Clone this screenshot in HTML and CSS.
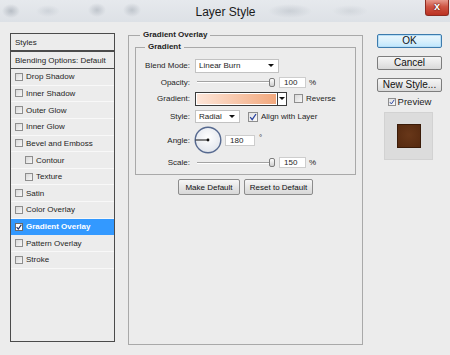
FILE: index.html
```html
<!DOCTYPE html>
<html lang="en">
<head>
  <meta charset="UTF-8">
  <title>Layer Style</title>
  <link rel="stylesheet" href="styles.css">
</head>
<body>
  <div class="titlebar">
    <span class="title">Layer Style</span>
    <span class="close">x</span>
  </div>

  <div class="main">
    <ul class="styles-list">
      <li class="head">Styles</li>
      <li class="blend">Blending Options: Default</li>
      <li><span class="cb"></span>Drop Shadow</li>
      <li><span class="cb"></span>Inner Shadow</li>
      <li><span class="cb"></span>Outer Glow</li>
      <li><span class="cb"></span>Inner Glow</li>
      <li><span class="cb"></span>Bevel and Emboss</li>
      <li class="indent"><span class="cb"></span>Contour</li>
      <li class="indent"><span class="cb"></span>Texture</li>
      <li><span class="cb"></span>Satin</li>
      <li><span class="cb"></span>Color Overlay</li>
      <li class="active"><span class="cb on"><svg width="6" height="6" viewBox="0 0 6 6"><path d="M0.6 3.2 L2.3 5 L5.4 0.6" fill="none" stroke="#1d2f6a" stroke-width="1.2"/></svg></span>Gradient Overlay</li>
      <li><span class="cb"></span>Pattern Overlay</li>
      <li><span class="cb"></span>Stroke</li>
    </ul>

    <fieldset class="box">
      <legend>Gradient Overlay</legend>
      <fieldset class="inner">
        <legend>Gradient</legend>
        <div class="form">
          <label>Blend Mode:</label>
          <div class="ctl">
            <div class="select blend-sel">Linear Burn<span class="arrow"></span></div>
          </div>

          <label>Opacity:</label>
          <div class="ctl">
            <div class="slider"><span class="track"></span><span class="thumb"></span></div>
            <span class="num">100</span><span class="unit">%</span>
          </div>

          <label>Gradient:</label>
          <div class="ctl">
            <div class="grad"><span class="grad-fill"></span><span class="grad-drop"><span class="arrow"></span></span></div>
            <span class="cb reverse"></span><span class="cb-text">Reverse</span>
          </div>

          <label>Style:</label>
          <div class="ctl">
            <div class="select style-sel">Radial<span class="arrow"></span></div>
            <span class="cb on align"><svg width="8" height="8" viewBox="0 0 8 8"><path d="M1.2 4.2 L3.2 6.6 L7 1" fill="none" stroke="#2c45a0" stroke-width="1.3"/></svg></span><span class="cb-text">Align with Layer</span>
          </div>

          <label>Angle:</label>
          <div class="ctl">
            <svg class="dial" width="28" height="28" viewBox="0 0 28 28">
              <defs>
                <radialGradient id="dialFill" cx="50%" cy="40%" r="60%">
                  <stop offset="0" stop-color="#ffffff"/>
                  <stop offset="1" stop-color="#e1e5ec"/>
                </radialGradient>
              </defs>
              <circle cx="14" cy="14" r="12.8" fill="url(#dialFill)" stroke="#56698f" stroke-width="1.4"/>
              <line x1="1.5" y1="14" x2="14" y2="14" stroke="#111" stroke-width="1"/>
              <circle cx="14" cy="14" r="1.4" fill="#111"/>
            </svg>
            <span class="num angle">180</span><span class="deg">°</span>
          </div>

          <label>Scale:</label>
          <div class="ctl">
            <div class="slider"><span class="track"></span><span class="thumb"></span></div>
            <span class="num">150</span><span class="unit">%</span>
          </div>
        </div>
      </fieldset>
      <div class="defaults">
        <button class="small make">Make Default</button>
        <button class="small reset">Reset to Default</button>
      </div>
    </fieldset>

    <div class="side">
      <button class="btn primary">OK</button>
      <button class="btn">Cancel</button>
      <button class="btn">New Style...</button>
      <div class="preview"><span class="cb on"><svg width="8" height="8" viewBox="0 0 8 8"><path d="M1.2 4.2 L3.2 6.6 L7 1" fill="none" stroke="#2c45a0" stroke-width="1.3"/></svg></span>Preview</div>
      <div class="swatch-box"><div class="swatch"></div></div>
    </div>
  </div>
</body>
</html>
```

FILE: styles.css
```css
* { box-sizing: border-box; }
body { margin:0; width:450px; height:355px; overflow:hidden; background:#ececec; font-family:"Liberation Sans", Arial, sans-serif; font-size:8px; color:#1e1e1e; }

.titlebar { height:22px; display:flex; align-items:flex-start;
  background:
    radial-gradient(ellipse 9px 7px at 11px 11px, rgba(150,158,168,0.55), transparent),
    radial-gradient(ellipse 12px 6px at 48px 11px, rgba(170,178,188,0.35), transparent),
    radial-gradient(ellipse 9px 7px at 97px 10px, rgba(150,158,168,0.45), transparent),
    radial-gradient(ellipse 9px 7px at 132px 10px, rgba(150,158,168,0.45), transparent),
    radial-gradient(ellipse 22px 7px at 290px 11px, rgba(160,168,178,0.35), transparent),
    radial-gradient(ellipse 18px 6px at 350px 11px, rgba(175,182,190,0.3), transparent),
    linear-gradient(#e6e9ed, #dde1e6); }
.title { flex:1; padding-left:26px; text-align:center; font-size:12px; line-height:25px; color:#1a1a1a; }
.close { width:24px; height:16px; margin-right:1px; border:1px solid #8d2c22; border-top:0; border-radius:0 0 3px 3px; background:linear-gradient(#e6998c, #cf5443 45%, #bb3222); color:#fff; font:bold 11px "Liberation Sans", Arial, sans-serif; line-height:13px; text-align:center; text-shadow:0 0 2px #5a1008, 0 0 1px #5a1008; }

.main { display:flex; align-items:flex-start; padding:11px 0 0 10px; }

.styles-list { list-style:none; margin:0; padding:0; width:105px; height:309px; border:1px solid #4b4b4b; background:#ececec; flex:none; }
.styles-list li { height:16.65px; display:flex; align-items:center; gap:3px; padding-left:4px; border-bottom:1px solid #f8f8f8; white-space:nowrap; }
.styles-list .head { height:18px; border-bottom:2px solid #4b4b4b; }
.styles-list .blend { height:17px; border-bottom:1px solid #4b4b4b; }
.styles-list .indent { padding-left:14px; }
.styles-list .active { background:#3399ff; color:#fff; font-weight:bold; border-bottom-color:#3399ff; }

.cb { width:8px; height:8px; flex:none; border:1px solid #8e8e8e; background:linear-gradient(135deg, #d8d8d8, #f7f7f7); display:flex; align-items:center; justify-content:center; }
.active .cb { background:#fff; border-color:#6a6a6a; }

.box { margin:-3px 0 0 13px; width:235px; height:315px; padding:2px 6px 0; border:1px solid #a9a9a9; flex:none; min-width:0; }
.box legend, .inner legend { padding:0 3px; margin-left:5px; font-weight:bold; line-height:10px; }
.inner { margin:0; padding:5px 4px 3px; border:1px solid #a9a9a9; min-width:0; }

.form { display:grid; grid-template-columns:50px auto; grid-template-rows:17px 16px 17px 19px 28px 17px; column-gap:5px; align-items:center; }
.form label { text-align:right; white-space:nowrap; }
.ctl { display:flex; align-items:center; }

.select { height:14px; display:flex; align-items:center; justify-content:space-between; padding:0 4px 0 3px; background:#fff; border:1px solid #c2c2c2; }
.blend-sel { width:84px; }
.style-sel { width:45px; height:13px; }
.arrow { width:0; height:0; border-left:3px solid transparent; border-right:3px solid transparent; border-top:3px solid #111; }

.slider { width:78px; height:10px; margin-left:2px; display:flex; align-items:center; }
.track { flex:1; height:2px; border-top:1px solid #a3a3a3; border-bottom:1px solid #fff; }
.thumb { width:6px; height:9px; margin-left:-3px; border:1px solid #7c7c7c; border-radius:2px; background:linear-gradient(#fdfdfd, #cfcfcf); }
.num { width:27px; height:11px; margin-left:4px; padding-left:4px; line-height:9px; background:#fff; border:1px solid #cdcdcd; }
.unit { margin-left:3px; }

.grad { width:92px; height:14px; display:flex; border:1px solid #3a3a3a; background:#fff; }
.grad-fill { flex:1; border:1px solid #fff; background:linear-gradient(90deg, #fde5d8, #f2a87d); }
.grad-drop { width:9px; border-left:1px solid #3a3a3a; display:flex; align-items:center; justify-content:center; }
.reverse { margin-left:7px; width:9px; height:9px; }
.cb-text { margin-left:3px; white-space:nowrap; }
.align { margin-left:8px; width:10px; height:10px; background:linear-gradient(135deg, #e2e2e2, #fafafa); }

.dial { margin-left:-1px; flex:none; }
.angle { margin-left:3px; width:30px; }
.deg { align-self:flex-start; margin:7px 0 0 4px; }

.defaults { display:flex; justify-content:center; gap:4px; margin-top:4px; }
.small { height:16px; padding:0; font:8px "Liberation Sans", Arial, sans-serif; color:#111; border:1px solid #8c8c8c; border-radius:2px; background:linear-gradient(#f7f7f7, #e6e6e6 50%, #d8d8d8); }
.make { width:62px; }
.reset { width:69px; }

.side { width:65px; margin:1px 0 0 14px; display:flex; flex-direction:column; gap:8px; flex:none; }
.btn { width:65px; height:14px; padding:0; font:10px "Liberation Sans", Arial, sans-serif; line-height:12px; color:#111; border:1px solid #7d7d7d; border-radius:2px; background:linear-gradient(#f6f6f6, #e8e8e8 50%, #d9d9d9); }
.primary { border-color:#3d7bad; box-shadow:inset 0 0 0 1px #b7def6; background:linear-gradient(#eaf6fd, #d9f0fc 50%, #bee6fd); }
.preview { display:flex; align-items:center; justify-content:center; gap:2px; margin-top:-3px; height:9px; font-size:9.5px; }
.preview .cb { background:linear-gradient(135deg, #e2e2e2, #fafafa); }
.swatch-box { width:49px; height:48px; margin:-2px 0 0 7px; background:#dcdcdc; border:1px solid #d2d2d2; display:flex; align-items:center; justify-content:center; }
.swatch { width:24px; height:24px; border:1px solid #3a1b08; background:radial-gradient(circle at 50% 45%, #683719, #55290f); }
```
